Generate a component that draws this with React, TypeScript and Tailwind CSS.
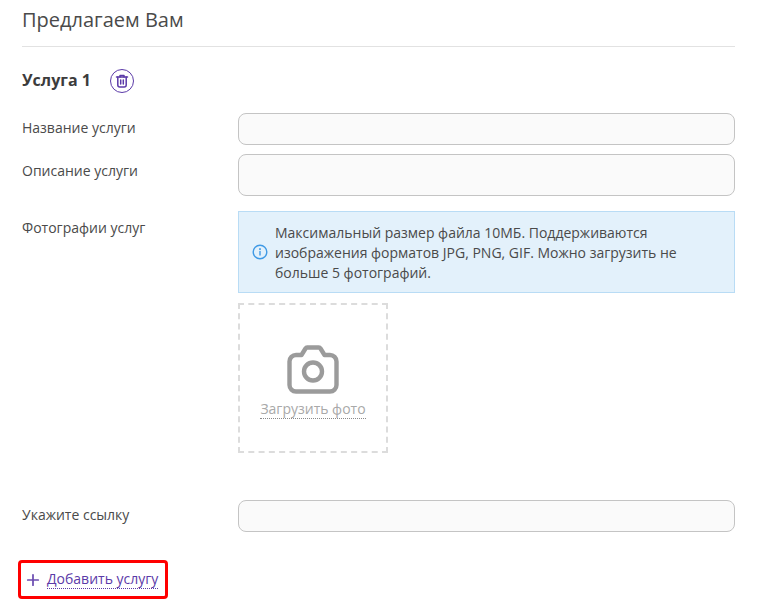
import { Plus } from 'lucide-react';

const font = { fontFamily: '"Open Sans", sans-serif' };

function Field({ label, height, top }: { label: string; height: string; top: string }) {
  return (
    <div className="flex">
      <label className={`w-[216px] shrink-0 text-[14px] leading-[20px] ${top} text-[#4a4a4a]`}>{label}</label>
      <div className={`flex-1 ${height} rounded-[8px] border border-[#c4c4c4] bg-[#fafafa]`} />
    </div>
  );
}

export default function App() {
  return (
    <div className="w-[760px] h-[605px] overflow-hidden bg-white pl-[22px] pr-[25px]" style={font}>
      <h2 className="h-[47px] pt-[6px] border-b border-[#e2e2e2] text-[20px] leading-[28px] text-[#4a4a4a]">Предлагаем Вам</h2>

      <div className="mt-[20px] h-[28px] flex items-center">
        <h3 className="mb-[2px] text-[16px] leading-[24px] font-bold text-[#3c3c3c]">Услуга 1</h3>
        <button className="ml-[19px] w-[24px] h-[24px] rounded-full border border-[#5b3aa8] flex items-center justify-center">
          <svg width="16" height="16" viewBox="0 0 16 16" fill="none" stroke="#5b3aa8" strokeWidth="1.5" strokeLinecap="round" strokeLinejoin="round">
            <path d="M2.5 4h11" />
            <path d="M6 4V2.6h4V4" />
            <path d="M3.8 4v8a2 2 0 0 0 2 2h4.4a2 2 0 0 0 2-2V4" />
            <path d="M6.7 7v4M9.3 7v4" />
          </svg>
        </button>
      </div>

      <div className="mt-[18px] flex flex-col gap-[9px]">
        <Field label="Название услуги" height="h-[32px]" top="pt-[5px]" />
        <Field label="Описание услуги" height="h-[42px]" top="pt-[7px]" />
      </div>

      <div className="mt-[15px] flex">
        <label className="w-[216px] shrink-0 text-[14px] leading-[20px] pt-[7px] text-[#4a4a4a]">Фотографии услуг</label>
        <div className="flex-1">
          <div className="h-[82px] flex items-center bg-[#e3f1fb] border border-[#b9dcf5] pl-[13px] pr-[40px]">
            <svg className="shrink-0" width="16" height="16" viewBox="0 0 16 16" fill="none" stroke="#3f9ae5" strokeWidth="1.4" strokeLinecap="round">
              <circle cx="8" cy="8" r="6.8" />
              <path d="M8 7.4v3.6" />
              <path d="M8 5v.2" strokeWidth="1.8" />
            </svg>
            <p className="ml-[7px] pt-[2px] text-[14px] leading-[20px] text-[#4a4a4a]">
              Максимальный размер файла 10МБ. Поддерживаются изображения форматов JPG, PNG, GIF. Можно загрузить не больше 5 фотографий.
            </p>
          </div>
          <div className="mt-[10px] w-[150px] h-[150px] border-2 border-dashed border-[#dcdcdc] flex flex-col items-center pt-[40px]">
            <svg width="52" height="50" viewBox="0 0 52 50" fill="none" stroke="#9b9b9b" strokeWidth="4.4" strokeLinejoin="round">
              <path d="M9 10h5.5l4-6.5a2 2 0 0 1 1.7-1h11.6a2 2 0 0 1 1.7 1l4 6.5H43a6.5 6.5 0 0 1 6.5 6.5v23.5A6.5 6.5 0 0 1 43 46.5H9A6.5 6.5 0 0 1 2.500 40V16.500A6.500 6.500 0 0 1 9 10Z" />
              <circle cx="26" cy="26.500" r="9" />
            </svg>
            <span className="mt-[4px] text-[14px] leading-[19px] text-[#a9a9a9] border-b border-dotted border-[#8a8a8a]">Загрузить фото</span>
          </div>
        </div>
      </div>

      <div className="mt-[47px]">
        <Field label="Укажите ссылку" height="h-[32px]" top="pt-[5px]" />
      </div>

      <div className="mt-[28px] -ml-[4px] w-[150px] h-[39px] rounded-[4px] border-[3px] border-[#ff0000] flex items-center pl-[3px]">
        <Plus size={18} strokeWidth={2.3} className="text-[#6a4bb0]" />
        <span className="ml-[5px] text-[14px] leading-[18px] text-[#5b3aa8] border-b border-dotted border-[#5b3aa8]">Добавить услугу</span>
      </div>
    </div>
  );
}
